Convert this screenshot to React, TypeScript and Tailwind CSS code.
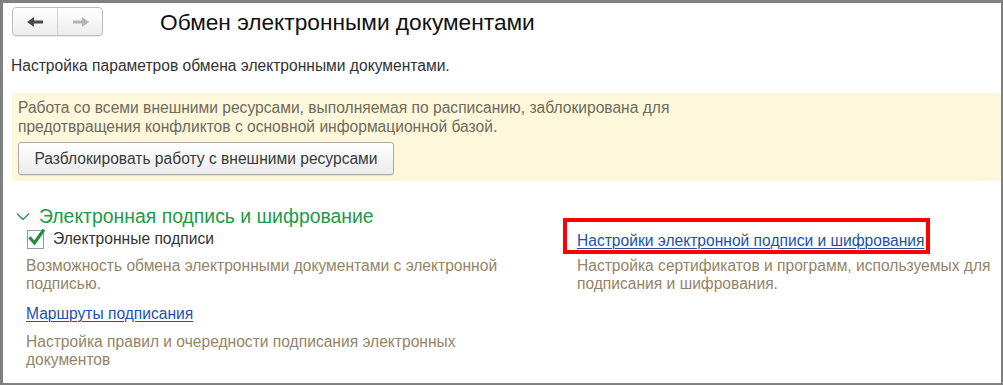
import React from "react";

function Arrow({ dir, color }: { dir: "left" | "right"; color: string }) {
  return (
    <svg width="17" height="10" viewBox="0 0 17 10" className={dir === "right" ? "-scale-x-100" : ""}>
      <path d="M0 5 L7 0 L7 3.5 L16 3.5 L16 6.5 L7 6.5 L7 10 Z" fill={color} />
    </svg>
  );
}

function NavButtons() {
  return (
    <div className="flex h-[29px] w-[91px] rounded-[4px] border border-[#bdbdbd] bg-gradient-to-b from-white to-[#ededed] shadow-[0_1px_1px_rgba(0,0,0,0.08)]">
      <div className="flex flex-1 items-center justify-center border-r border-[#d2d2d2]">
        <Arrow dir="left" color="#4a4a4a" />
      </div>
      <div className="flex flex-1 items-center justify-center">
        <Arrow dir="right" color="#b4b4b4" />
      </div>
    </div>
  );
}

function CheckBox() {
  return (
    <div className="relative h-[19px] w-[17px] border border-[#9a9a9a] bg-white">
      <svg width="20" height="20" viewBox="0 0 20 20" className="absolute -left-[1px] -top-[3px]">
        <path d="M3.5 10.5 L7.5 15 L16 3" fill="none" stroke="#1f8f3e" strokeWidth="3.2" strokeLinecap="square" />
      </svg>
    </div>
  );
}

export default function App() {
  return (
    <div className="h-[385px] w-[1003px] overflow-hidden border-b-[2px] border-l-[3px] border-r-[2px] border-t-[3px] border-[#808080] bg-white font-['Liberation_Sans',Arial,sans-serif] text-[15.6px]">
      <div className="flex h-[29px] items-center pl-[9px] mt-[4px]">
        <NavButtons />
        <h1 className="ml-[57px] text-[22.7px] leading-[26px] text-[#111]">Обмен электронными документами</h1>
      </div>

      <p className="ml-[8px] mt-[21px] leading-[18px] text-[#333]">
        Настройка параметров обмена электронными документами.
      </p>

      <div className="ml-[9px] mt-[18px] bg-[#fdf8db] pb-[6px] pl-[6px] pt-[5px]">
        <p className="w-[700px] leading-[19px] text-[#6f6a5c]">
          Работа со всеми внешними ресурсами, выполняемая по расписанию, заблокирована для предотвращения конфликтов с основной информационной базой.
        </p>
        <button className="mt-[6px] flex h-[33px] w-[376px] items-center justify-center rounded-[3px] border border-[#a9a9a9] bg-gradient-to-b from-white to-[#ebebeb] text-[15.6px] text-[#3a3a3a] shadow-[0_1px_1px_rgba(0,0,0,0.1)]">
          Разблокировать работу с внешними ресурсами
        </button>
      </div>

      <div className="ml-[13px] mt-[24px] flex h-[22px] items-center">
        <svg width="14" height="9" viewBox="0 0 14 9">
          <path d="M1 1.5 L7 7.5 L13 1.5" fill="none" stroke="#2b9a55" strokeWidth="1.4" />
        </svg>
        <span className="ml-[9px] text-[19.4px] leading-[22px] text-[#1d9a47]">Электронная подпись и шифрование</span>
      </div>

      <div className="flex">
        <div className="ml-[23px] w-[490px]">
          <div className="mt-[2px] flex h-[20px] items-center">
            <div className="ml-[1px]">
              <CheckBox />
            </div>
            <span className="ml-[9px] text-[#333]">Электронные подписи</span>
          </div>
          <p className="mt-[8px] leading-[18px] text-[#958466]">
            Возможность обмена электронными документами с электронной подписью.
          </p>
          <a className="mt-[12px] inline-block leading-[18px] text-[#2150b2] underline decoration-1 underline-offset-2">
            Маршруты подписания
          </a>
          <p className="mt-[8px] leading-[18px] text-[#958466]">
            Настройка правил и очередности подписания электронных документов
          </p>
        </div>

        <div className="ml-[61px] w-[415px] pt-[2px]">
          <span className="relative inline-block">
            <a className="leading-[18px] text-[#2150b2] underline decoration-1 underline-offset-2">
              Настройки электронной подписи и шифрования
            </a>
            <span className="absolute -left-[14px] -top-[11px] h-[36px] w-[367px] border-[4px] border-[#ff0000]" />
          </span>
          <p className="mt-[5px] leading-[18px] text-[#958466]">
            Настройка сертификатов и программ, используемых для подписания и шифрования.
          </p>
        </div>
      </div>
    </div>
  );
}
